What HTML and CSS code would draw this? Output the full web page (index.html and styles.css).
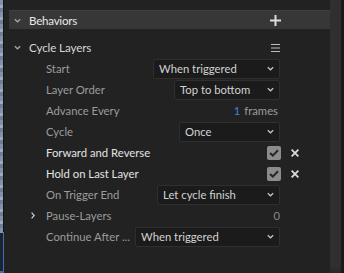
FILE: index.html
```html
<!DOCTYPE html>
<html>
<head>
<meta charset="utf-8">
<link rel="stylesheet" href="styles.css">
</head>
<body>
<div class="app">
  <div class="strip"><div class="strip-sel"></div></div>
  <div class="sep"></div>
  <div class="panel">
    <div class="header">
      <svg class="chev" width="7" height="5" viewBox="0 0 7 5"><path d="M0.8 1.2 L3.5 3.8 L6.2 1.2" fill="none" stroke="#a8a8a8" stroke-width="1.2"/></svg>
      <span class="header-title">Behaviors</span>
      <svg class="plus" width="11" height="11" viewBox="0 0 11 11"><path d="M5.5 0 V11 M0 5.5 H11" stroke="#dcdcdc" stroke-width="2"/></svg>
    </div>
    <div class="section">
      <svg class="chev" width="7" height="5" viewBox="0 0 7 5"><path d="M0.8 1.2 L3.5 3.8 L6.2 1.2" fill="none" stroke="#a8a8a8" stroke-width="1.2"/></svg>
      <span class="section-title">Cycle Layers</span>
      <svg class="menu" width="9" height="8" viewBox="0 0 9 8"><path d="M0 0.5 H9 M0 4 H9 M0 7.5 H9" stroke="#bdbdbd" stroke-width="1"/></svg>
    </div>

    <div class="row">
      <div class="lead"></div><div class="label">Start</div>
      <div class="ctl"><div class="dd w127"><span>When triggered</span><svg width="7" height="5" viewBox="0 0 7 5"><path d="M0.8 1.2 L3.5 3.8 L6.2 1.2" fill="none" stroke="#c8c8c8" stroke-width="1.2"/></svg></div></div>
      <div class="extra"></div>
    </div>
    <div class="row">
      <div class="lead"></div><div class="label">Layer Order</div>
      <div class="ctl"><div class="dd w106"><span>Top to bottom</span><svg width="7" height="5" viewBox="0 0 7 5"><path d="M0.8 1.2 L3.5 3.8 L6.2 1.2" fill="none" stroke="#c8c8c8" stroke-width="1.2"/></svg></div></div>
      <div class="extra"></div>
    </div>
    <div class="row">
      <div class="lead"></div><div class="label">Advance Every</div>
      <div class="ctl"><div class="value"><span class="num">1</span> frames</div></div>
      <div class="extra"></div>
    </div>
    <div class="row">
      <div class="lead"></div><div class="label">Cycle</div>
      <div class="ctl"><div class="dd w101"><span>Once</span><svg width="7" height="5" viewBox="0 0 7 5"><path d="M0.8 1.2 L3.5 3.8 L6.2 1.2" fill="none" stroke="#c8c8c8" stroke-width="1.2"/></svg></div></div>
      <div class="extra"></div>
    </div>
    <div class="row">
      <div class="lead"></div><div class="label bright">Forward and Reverse</div>
      <div class="ctl"><div class="check"><svg width="10" height="8" viewBox="0 0 10 8"><path d="M1 4 L3.8 6.6 L9 1.2" fill="none" stroke="#262626" stroke-width="2"/></svg></div></div>
      <div class="extra"><svg class="x" width="8" height="8" viewBox="0 0 8 8"><path d="M0.6 0.6 L7.4 7.4 M7.4 0.6 L0.6 7.4" stroke="#dadada" stroke-width="1.8"/></svg></div>
    </div>
    <div class="row">
      <div class="lead"></div><div class="label bright">Hold on Last Layer</div>
      <div class="ctl"><div class="check"><svg width="10" height="8" viewBox="0 0 10 8"><path d="M1 4 L3.8 6.6 L9 1.2" fill="none" stroke="#262626" stroke-width="2"/></svg></div></div>
      <div class="extra"><svg class="x" width="8" height="8" viewBox="0 0 8 8"><path d="M0.6 0.6 L7.4 7.4 M7.4 0.6 L0.6 7.4" stroke="#dadada" stroke-width="1.8"/></svg></div>
    </div>
    <div class="row">
      <div class="lead"></div><div class="label">On Trigger End</div>
      <div class="ctl"><div class="dd w123"><span>Let cycle finish</span><svg width="7" height="5" viewBox="0 0 7 5"><path d="M0.8 1.2 L3.5 3.8 L6.2 1.2" fill="none" stroke="#c8c8c8" stroke-width="1.2"/></svg></div></div>
      <div class="extra"></div>
    </div>
    <div class="row">
      <div class="lead"><svg width="4" height="7" viewBox="0 0 4 7"><path d="M0.6 0.6 L3.2 3.5 L0.6 6.4" fill="none" stroke="#cfcfcf" stroke-width="1.2"/></svg></div><div class="label">Pause-Layers</div>
      <div class="ctl"><div class="value zero">0</div></div>
      <div class="extra"></div>
    </div>
    <div class="row">
      <div class="lead"></div><div class="label">Continue After ...</div>
      <div class="ctl"><div class="dd w145"><span>When triggered</span><svg width="7" height="5" viewBox="0 0 7 5"><path d="M0.8 1.2 L3.5 3.8 L6.2 1.2" fill="none" stroke="#c8c8c8" stroke-width="1.2"/></svg></div></div>
      <div class="extra"></div>
    </div>
  </div>
  <div class="scroll"><div class="thumb"></div></div>
  <div class="edge"></div>
</div>
</body>
</html>
```
FILE: styles.css
```css
html, body {
  margin: 0;
  padding: 0;
  background: #222222;
  width: 344px;
  height: 273px;
  overflow: hidden;
  font-family: Lato, "Open Sans", sans-serif;
  font-size: 11.3px;
}

.app {
  display: flex;
  height: 273px;
}

.strip {
  width: 3px;
  display: flex;
  flex-direction: column;
  background: repeating-linear-gradient(180deg, #7f93ad 0px, #7f93ad 5px, #9aaac0 5px, #9aaac0 8px, #6e7f96 8px, #6e7f96 12px);
}

.strip-sel {
  margin-top: auto;
  height: 38px;
  background: #1b2430;
  border-bottom: 2px solid #3d6fa8;
}

.sep {
  width: 1px;
  background: linear-gradient(180deg, #121212 0px, #121212 232px, #3d6fa8 232px);
}

.panel {
  width: 326px;
  padding: 10px 0 0 5px;
  box-sizing: border-box;
  background: #222222;
}

.header {
  height: 19px;
  background: #373737;
  display: flex;
  align-items: center;
  padding-left: 5px;
  border-top: 1px solid #3e3e3e;
  box-sizing: border-box;
}

.chev {
  flex: none;
}

.header-title {
  margin-left: 8px;
  color: #e8e8e8;
  font-size: 11.6px;
  letter-spacing: -0.25px;
}

.plus {
  margin-left: auto;
  margin-right: 49px;
}

.section {
  height: 21px;
  margin-top: 8px;
  display: flex;
  align-items: center;
  padding-left: 5px;
}

.section-title {
  margin-left: 8px;
  color: #d8d8d8;
  font-size: 11.6px;
  letter-spacing: -0.1px;
}

.menu {
  margin-left: auto;
  margin-right: 50px;
}

.row {
  display: grid;
  grid-template-columns: 37px 1fr auto 50px;
  height: 21px;
  align-items: center;
}

.lead {
  display: flex;
  align-items: center;
  padding-left: 22px;
}

.label {
  color: #9c9c9c;
  white-space: nowrap;
}

.label.bright {
  color: #e2e2e2;
}

.ctl {
  display: flex;
  justify-content: flex-end;
  align-items: center;
}

.dd {
  height: 20px;
  box-sizing: border-box;
  background: #1b1b1b;
  border: 1px solid #2f2f2f;
  border-radius: 2px;
  display: flex;
  align-items: center;
  justify-content: space-between;
  padding: 0 5px 0 5px;
  color: #d2d2d2;
}

.w127 { width: 127px; }
.w106 { width: 106px; }
.w101 { width: 101px; }
.w123 { width: 123px; }
.w145 { width: 145px; }

.value {
  color: #9c9c9c;
  padding-right: 2px;
}

.value.zero {
  color: #8a8a8a;
  padding-right: 0;
}

.num {
  color: #3b84dc;
  margin-right: 1px;
}

.check {
  width: 14px;
  height: 14px;
  border-radius: 2px;
  background: #8c8c8c;
  display: flex;
  align-items: center;
  justify-content: center;
  margin-right: -1px;
}

.extra {
  display: flex;
  align-items: center;
  padding-left: 11px;
}

.scroll {
  width: 11px;
  background: #2a2a2a;
  display: flex;
  flex-direction: column;
}

.thumb {
  height: 269px;
  background: #2f2f2f;
  border-radius: 0 0 4px 4px;
}

.edge {
  width: 3px;
  background: #1a1a1a;
}
```
